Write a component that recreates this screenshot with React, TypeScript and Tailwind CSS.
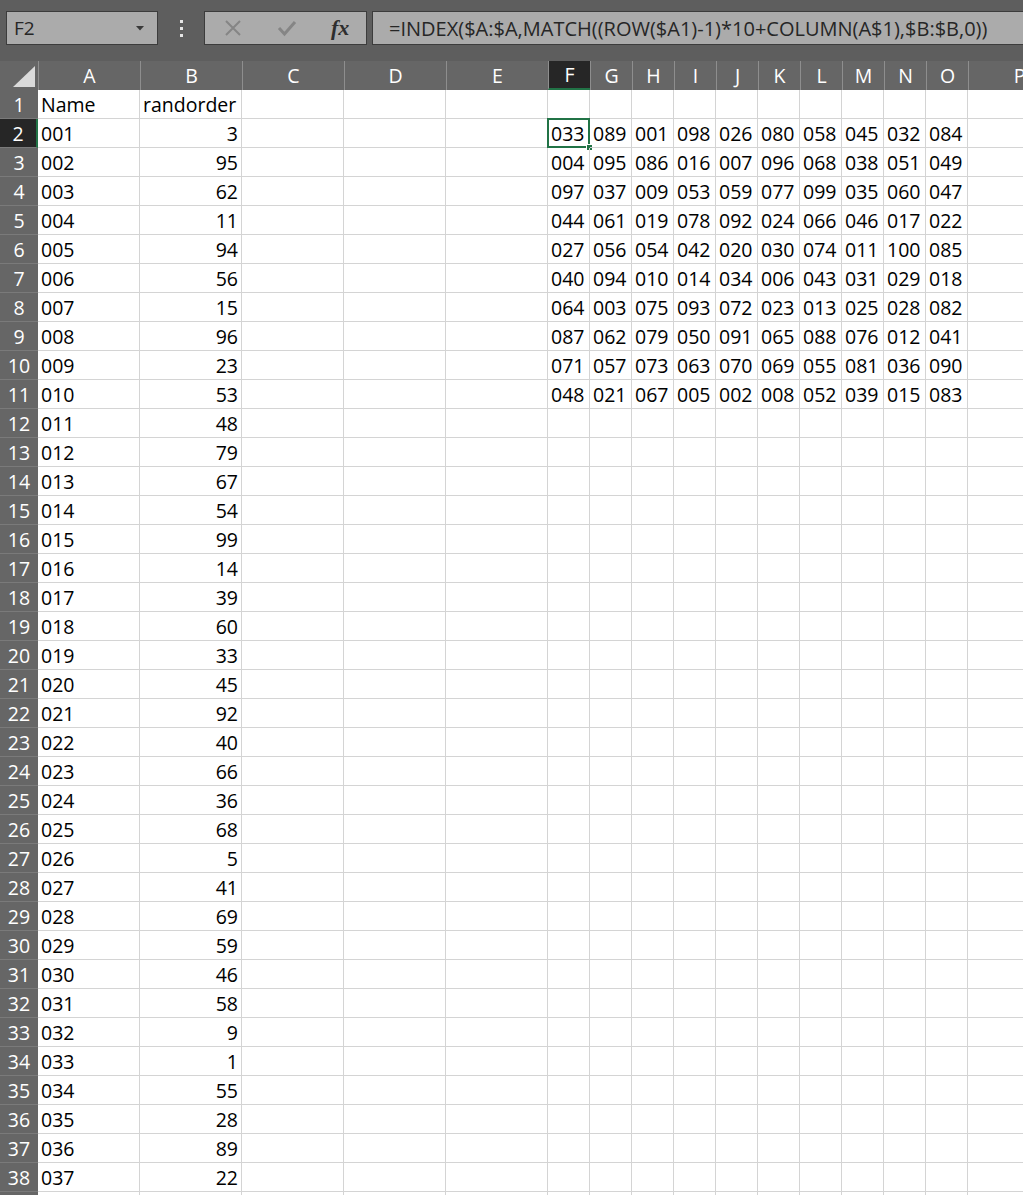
import React from "react";

const names = Array.from({ length: 37 }, (_, i) => String(i + 1).padStart(3, "0"));
const order = [3, 95, 62, 11, 94, 56, 15, 96, 23, 53, 48, 79, 67, 54, 99, 14, 39, 60, 33, 45, 92, 40, 66, 36, 68, 5, 41, 69, 59, 46, 58, 9, 1, 55, 28, 89, 22];

const grid = [
  "033 089 001 098 026 080 058 045 032 084",
  "004 095 086 016 007 096 068 038 051 049",
  "097 037 009 053 059 077 099 035 060 047",
  "044 061 019 078 092 024 066 046 017 022",
  "027 056 054 042 020 030 074 011 100 085",
  "040 094 010 014 034 006 043 031 029 018",
  "064 003 075 093 072 023 013 025 028 082",
  "087 062 079 050 091 065 088 076 012 041",
  "071 057 073 063 070 069 055 081 036 090",
  "048 021 067 005 002 008 052 039 015 083",
].map((r) => r.split(" "));

const cols = ["A", "B", "C", "D", "E", "F", "G", "H", "I", "J", "K", "L", "M", "N", "O", "P"];

function cellValue(row: number, col: number): { text: string; right?: boolean } {
  // row is 1-based sheet row, col is 0-based (A = 0)
  if (row === 1) {
    if (col === 0) return { text: "Name" };
    if (col === 1) return { text: "randorder" };
    return { text: "" };
  }
  if (col === 0 && row - 2 < names.length) return { text: names[row - 2] };
  if (col === 1 && row - 2 < order.length) return { text: String(order[row - 2]), right: true };
  if (col >= 5 && col <= 14 && row >= 2 && row <= 11) return { text: grid[row - 2][col - 5] };
  return { text: "" };
}

function Toolbar() {
  return (
    <div className="h-[61px] bg-[#5e5e5e] flex items-start pt-[11px] pl-[6px]">
      <div className="w-[152px] h-[34px] bg-[#ababab] border border-[#3c3c3c] flex items-center justify-between pl-[7px] pr-[13px]">
        <span className="text-[19px] text-[#262626] leading-none">F2</span>
        <svg width="8" height="5" viewBox="0 0 8 5">
          <path d="M0 0 L8 0 L4 4.5 Z" fill="#3a3a3a" />
        </svg>
      </div>
      <div className="w-[46px] h-[34px] flex flex-col items-center justify-center gap-[4px]">
        <div className="w-[3px] h-[3px] bg-[#e6e6e6]" />
        <div className="w-[3px] h-[3px] bg-[#e6e6e6]" />
        <div className="w-[3px] h-[3px] bg-[#e6e6e6]" />
      </div>
      <div className="w-[163px] h-[34px] bg-[#ababab] border border-[#3c3c3c] flex items-center">
        <svg width="18" height="18" viewBox="0 0 18 18" className="ml-[19px]">
          <path d="M2 2 L16 16 M16 2 L2 16" stroke="#858585" strokeWidth="2" />
        </svg>
        <svg width="20" height="18" viewBox="0 0 20 18" className="ml-[35px]">
          <path d="M2 9 L7.5 15 L18 3" stroke="#858585" strokeWidth="3" fill="none" />
        </svg>
        <span className="ml-[34px] font-['Liberation_Serif'] italic font-bold text-[22px] text-[#2e2e2e] leading-none">
          fx
        </span>
      </div>
      <div className="ml-[5px] flex-1 h-[34px] bg-[#ababab] border-y border-l border-[#3c3c3c] flex items-center pl-[16px]">
        <span className="text-[20px] text-[#262626] leading-none whitespace-nowrap pt-[1px]">
          =INDEX($A:$A,MATCH((ROW($A1)-1)*10+COLUMN(A$1),$B:$B,0))
        </span>
      </div>
    </div>
  );
}

function HeaderRow() {
  return (
    <>
      <div className="h-[29px] bg-[#666666] relative">
        <svg width="22" height="21" viewBox="0 0 22 21" className="absolute right-[3px] bottom-[3px]">
          <path d="M22 0 L22 21 L0 21 Z" fill="#dadada" />
        </svg>
      </div>
      {cols.map((c) =>
        c === "F" ? (
          <div
            key={c}
            className="h-[29px] bg-[#262626] border-l border-[#8e8e8e] border-b-2 border-b-[#217346] flex items-center justify-center text-white text-[19.5px] leading-none"
          >
            {c}
          </div>
        ) : (
          <div
            key={c}
            className="h-[29px] bg-[#666666] border-l border-[#8e8e8e] flex items-center justify-center text-white text-[19.5px] leading-none pt-[1px]"
          >
            {c}
          </div>
        )
      )}
    </>
  );
}

function Row({ row }: { row: number }) {
  const selected = row === 2;
  const label = row <= 38 ? String(row) : "";
  return (
    <>
      {selected ? (
        <div className="h-[29px] bg-[#262626] border-b border-[#7a7a7a] border-r-2 border-r-[#217346] flex items-center justify-center pt-[2px] text-white text-[19.5px] leading-none">
          {label}
        </div>
      ) : (
        <div className="h-[29px] bg-[#666666] border-b border-[#7a7a7a] flex items-center justify-center pt-[2px] text-white text-[19.5px] leading-none">
          {label}
        </div>
      )}
      {cols.map((c, ci) => {
        const v = cellValue(row, ci);
        const active = row === 2 && c === "F";
        return (
          <div
            key={c}
            className={
              v.right
                ? "relative h-[29px] border-b border-r border-[#d4d4d4] flex items-center justify-end pr-[3px] pt-[2px] text-[19.5px] leading-none text-black whitespace-nowrap"
                : "relative h-[29px] border-b border-r border-[#d4d4d4] flex items-center pl-[3px] pt-[2px] text-[19.5px] leading-none text-black whitespace-nowrap"
            }
          >
            {v.text}
            {active && (
              <>
                <div className="absolute -left-[1px] -top-[1px] -right-[1px] -bottom-[1px] border-2 border-[#217346]" />
                <div className="absolute -right-[4px] -bottom-[4px] w-[7px] h-[7px] bg-[#217346] border border-white" />
              </>
            )}
          </div>
        );
      })}
    </>
  );
}

export default function App() {
  const rows = Array.from({ length: 39 }, (_, i) => i + 1);
  return (
    <div className="h-[1195px] w-full overflow-hidden bg-white font-['Open_Sans',sans-serif]">
      <Toolbar />
      <div className="grid grid-cols-[38px_102px_102px_102px_102px_102px_repeat(10,42px)_102px] w-max">
        <HeaderRow />
        {rows.map((r) => (
          <Row key={r} row={r} />
        ))}
      </div>
    </div>
  );
}
